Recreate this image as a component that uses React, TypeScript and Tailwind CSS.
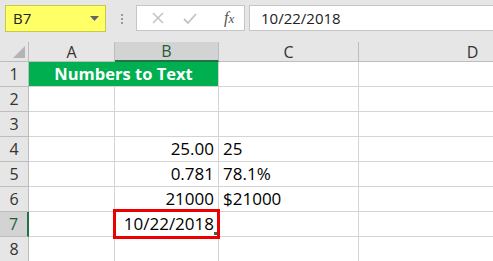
import React from "react";

const font = { fontFamily: '"Open Sans", "Liberation Sans", sans-serif' };

function Header({ label, active }: { label: string; active?: boolean }) {
  return (
    <div
      className={
        "flex h-[20px] items-center justify-center border-r border-[#bdbdbd] text-[16px] " +
        (active
          ? "border-b-2 border-b-[#217346] bg-[#d3d3d3] text-[#1e5e3a]"
          : "border-b border-b-[#bdbdbd] bg-[#e6e6e6] text-[#333]")
      }
    >
      {label}
    </div>
  );
}

function RowHead({ n, active }: { n: number; active?: boolean }) {
  return (
    <div
      className={
        "flex h-[25px] items-center justify-center border-b border-[#bdbdbd] text-[16px] " +
        (active
          ? "border-r-2 border-r-[#217346] bg-[#d3d3d3] text-[#1e5e3a]"
          : "border-r border-r-[#bdbdbd] bg-[#e6e6e6] text-[#333]")
      }
    >
      {n}
    </div>
  );
}

function Cell({ children, right }: { children?: React.ReactNode; right?: boolean }) {
  return (
    <div
      className={
        "flex h-[25px] items-center border-b border-r border-[#d4d4d4] px-[4px] text-[17px] text-black " +
        (right ? "justify-end" : "justify-start")
      }
    >
      {children}
    </div>
  );
}

const rows: [string, string][] = [
  ["", ""],
  ["", ""],
  ["25.00", "25"],
  ["0.781", "78.1%"],
  ["21000", "$21000"],
];

export default function App() {
  return (
    <div className="h-[261px] w-[493px] overflow-hidden bg-white" style={font}>
      {/* formula bar */}
      <div className="flex h-[42px] items-start bg-[#e6e6e6] pt-[5px]">
        <div className="ml-[5px] flex h-[27px] w-[101px] items-center justify-between border border-[#c8c84a] bg-[#ffff66] pl-[7px] pr-[6px] text-[15px] text-[#222]">
          <span>B7</span>
          <svg width="9" height="5" viewBox="0 0 9 5">
            <path d="M0 0h9L4.5 5z" fill="#666" />
          </svg>
        </div>
        <div className="ml-[15px] mt-[9px] flex flex-col gap-[2px]">
          <span className="h-[2px] w-[2px] bg-[#9a9a9a]" />
          <span className="h-[2px] w-[2px] bg-[#9a9a9a]" />
          <span className="h-[2px] w-[2px] bg-[#9a9a9a]" />
        </div>
        <div className="ml-[13px] flex h-[26px] w-[109px] items-center border border-[#c6c6c6] bg-white">
          <svg className="ml-[15px]" width="12" height="12" viewBox="0 0 12 12">
            <path d="M1 1l10 10M11 1L1 11" stroke="#c4c4c4" strokeWidth="1.6" />
          </svg>
          <svg className="ml-[19px]" width="14" height="11" viewBox="0 0 14 11">
            <path d="M1 6l4 4 8-9" stroke="#c4c4c4" strokeWidth="1.8" fill="none" />
          </svg>
          <span
            className="ml-[27px] text-[16px] italic text-[#555]"
            style={{ fontFamily: '"Liberation Serif", serif' }}
          >
            f<span className="text-[13px]">x</span>
          </span>
        </div>
        <div className="ml-[4px] flex h-[26px] flex-1 items-center border border-r-0 border-[#c6c6c6] bg-white pl-[11px] text-[15px] text-[#222]">
          10/22/2018
        </div>
      </div>

      {/* grid */}
      <div className="grid w-[587px] grid-cols-[29px_86px_104px_140px_228px]">
        <div className="relative h-[20px] border-b border-r border-[#bdbdbd] bg-[#e6e6e6]">
          <svg className="absolute bottom-[3px] right-[3px]" width="12" height="12" viewBox="0 0 12 12">
            <path d="M12 0v12H0z" fill="#b4b4b4" />
          </svg>
        </div>
        <Header label="A" />
        <Header label="B" active />
        <Header label="C" />
        <Header label="D" />

        <RowHead n={1} />
        <div className="col-span-2 flex h-[25px] items-center justify-center border-b border-r border-[#d4d4d4] bg-[#00b050] text-[16.5px] font-bold text-white">
          Numbers to Text
        </div>
        <Cell />
        <Cell />

        {rows.map(([b, c], i) => (
          <React.Fragment key={i}>
            <RowHead n={i + 2} />
            <Cell />
            <Cell right>{b}</Cell>
            <Cell>{c}</Cell>
            <Cell />
          </React.Fragment>
        ))}

        <RowHead n={7} active />
        <Cell />
        <div className="relative flex h-[25px] items-center justify-end border-b border-r border-[#d4d4d4] px-[4px] text-[17px] text-black">
          10/22/2018
          <div className="absolute -bottom-[3px] -left-[2px] -right-[2px] -top-[3px] border-[3px] border-[#ee0000]" />
          <div className="absolute bottom-[1px] right-[1px] h-[3px] w-[3px] bg-[#217346]" />
        </div>
        <Cell />
        <Cell />

        <RowHead n={8} />
        <Cell />
        <Cell />
        <Cell />
        <Cell />
      </div>
    </div>
  );
}
